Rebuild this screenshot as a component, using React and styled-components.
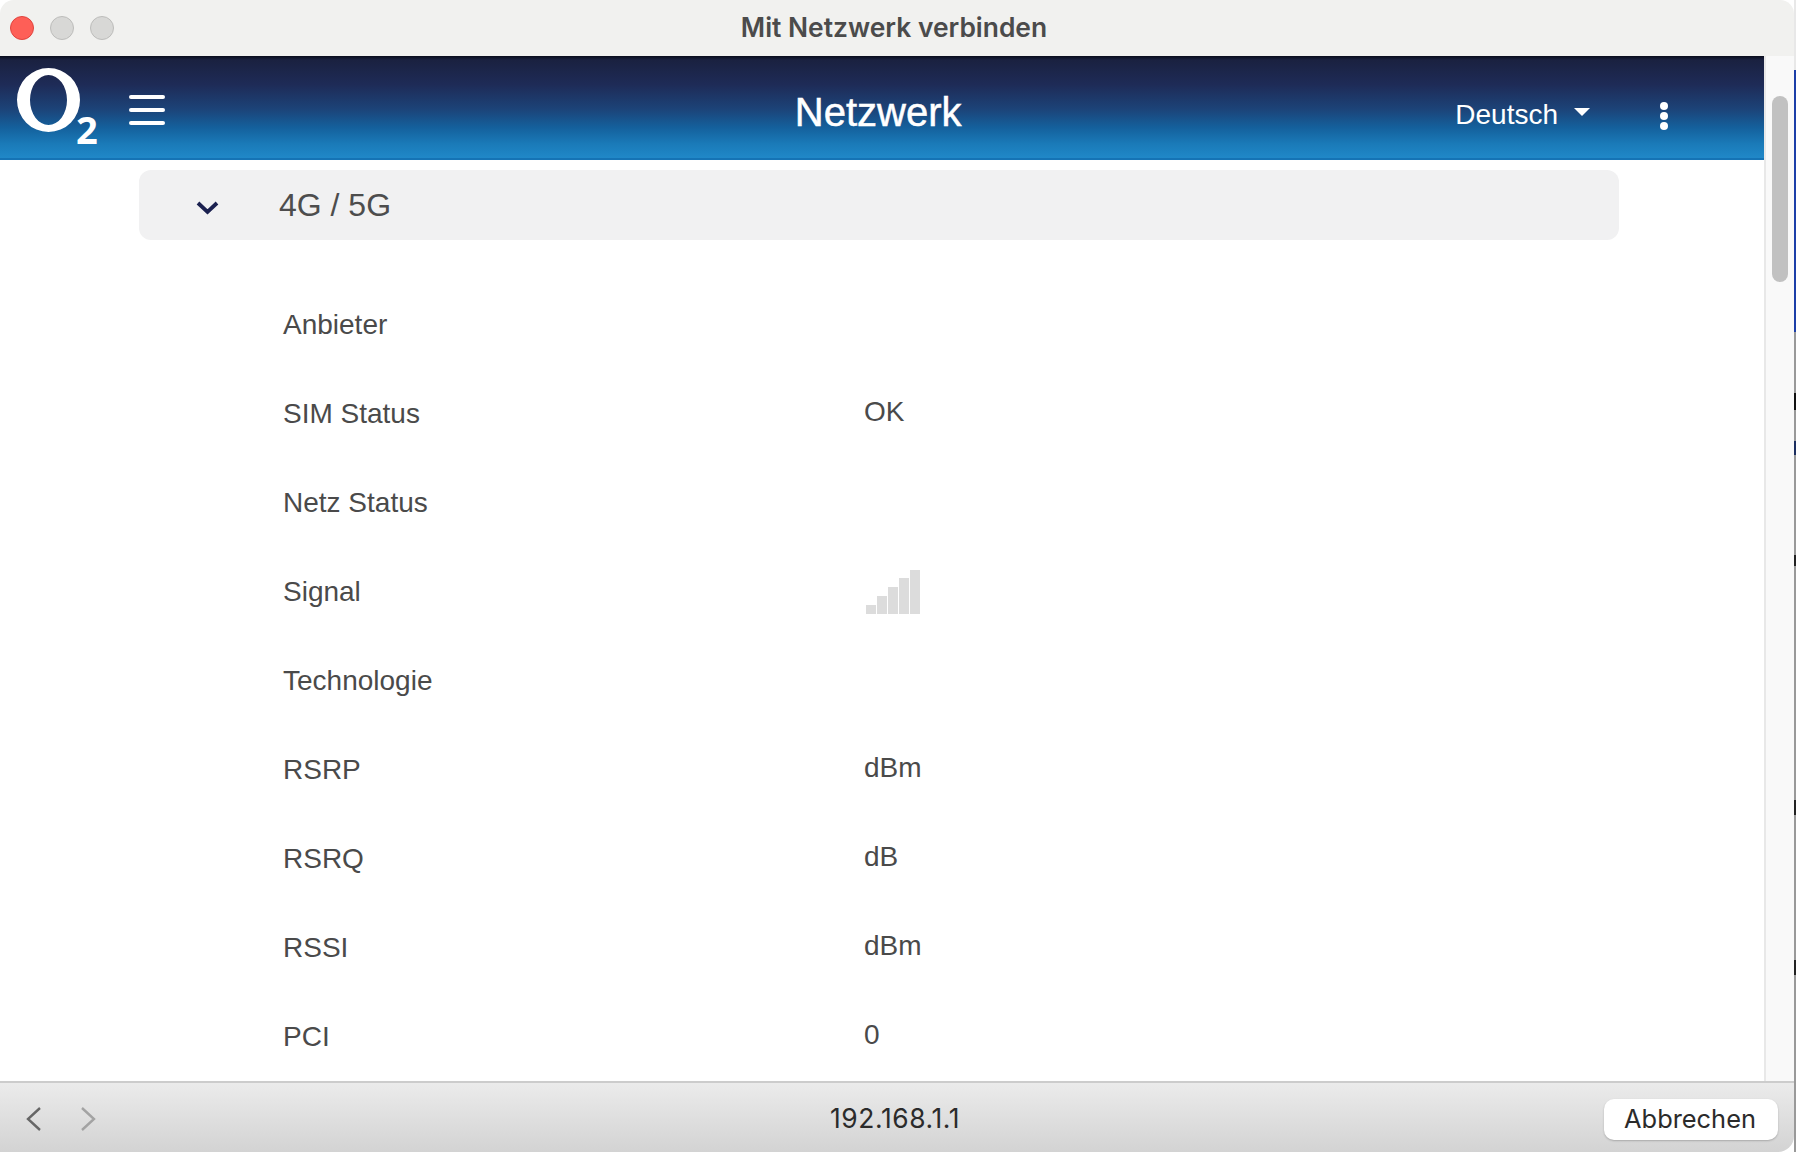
import React from 'react';
import styled, { createGlobalStyle } from 'styled-components';

const GlobalStyle = createGlobalStyle`
  html, body {
    margin: 0;
    padding: 0;
    background: #ffffff;
    overflow: hidden;
  }
`;

const Desktop = styled.div`
  display: flex;
  width: 1796px;
  height: 1152px;
  background: #ffffff;
`;

const Edge = styled.div`
  width: 2px;
  background: linear-gradient(
    to bottom,
    #e8e8e8 0, #e8e8e8 70px,
    #1c3fa8 70px, #1c3fa8 332px,
    #999 332px, #999 393px,
    #111 393px, #111 410px,
    #999 410px, #999 441px,
    #1c2f60 441px, #1c2f60 455px,
    #999 455px, #999 555px,
    #222 555px, #222 566px,
    #999 566px, #999 800px,
    #222 800px, #222 815px,
    #999 815px, #999 960px,
    #222 960px, #222 975px,
    #999 975px
  );
`;

const Window = styled.div`
  flex: 1;
  display: flex;
  flex-direction: column;
  overflow: hidden;
  border-radius: 14px 14px 16px 0;
  font-family: "Liberation Sans", Arial, sans-serif;
`;

const TitleBar = styled.div`
  position: relative;
  height: 56px;
  flex-shrink: 0;
  display: flex;
  align-items: center;
  justify-content: center;
  box-sizing: border-box;
  padding: 0 6px 3px 0;
  background: #f1f1ef;
`;

const Lights = styled.div`
  position: absolute;
  left: 10px;
  top: 16px;
  display: flex;
  gap: 16px;
`;

const Light = styled.span`
  width: 24px;
  height: 24px;
  box-sizing: border-box;
  border-radius: 50%;
  background: ${(p) => p.$color};
  border: 1px solid ${(p) => p.$border};
`;

const WindowTitle = styled.div`
  font-family: Inter, sans-serif;
  font-size: 26.4px;
  font-weight: 600;
  color: #4b4b4b;
`;

const Middle = styled.div`
  flex: 1;
  min-height: 0;
  display: flex;
`;

const Page = styled.div`
  flex: 1;
  min-width: 0;
  display: flex;
  flex-direction: column;
  overflow: hidden;
  background: #ffffff;
`;

const Header = styled.header`
  height: 104px;
  flex-shrink: 0;
  display: flex;
  align-items: flex-start;
  box-sizing: border-box;
  color: #ffffff;
  border-bottom: 2px solid #1573b5;
  background: linear-gradient(to bottom, #0a0c1c 0, #1a2140 4px, #1e2b57 28%, #1c4378 52%, #14609c 70%, #1a7ab8 86%, #2088c8 100%);
`;

const Logo = styled.svg`
  margin: 10px 0 0 15px;
  width: 90px;
  height: 92px;
  flex-shrink: 0;
`;

const Burger = styled.div`
  margin: 39px 0 0 24px;
  width: 36px;
  display: flex;
  flex-direction: column;
  gap: 9.5px;
`;

const BurgerLine = styled.span`
  height: 3.5px;
  border-radius: 2px;
  background: #ffffff;
`;

const PageTitle = styled.h1`
  margin: 31px 0 0 0;
  flex: 1;
  text-align: center;
  font-size: 40px;
  line-height: 50px;
  font-weight: 400;
  -webkit-text-stroke: 0.5px #fff;
  padding-left: 136px;
`;

const Lang = styled.div`
  margin: 40px 0 0 0;
  display: flex;
  align-items: center;
  gap: 16px;
  font-size: 28px;
  line-height: 38px;
`;

const Caret = styled.span`
  width: 0;
  height: 0;
  margin-top: -6px;
  border-left: 8px solid transparent;
  border-right: 8px solid transparent;
  border-top: 8px solid #ffffff;
`;

const Dots = styled.div`
  margin: 46px 96px 0 70px;
  display: flex;
  flex-direction: column;
  gap: 2px;
`;

const Dot = styled.span`
  width: 8px;
  height: 8px;
  border-radius: 50%;
  background: #ffffff;
`;

const Content = styled.main`
  flex: 1;
  min-height: 0;
  padding: 10px 145px 0 139px;
`;

const Panel = styled.div`
  height: 70px;
  display: flex;
  align-items: center;
  border-radius: 12px;
  background: #f1f1f2;
  color: #4d4d4d;
  font-size: 32px;
`;

const Chevron = styled.svg`
  margin-left: 56px;
  width: 24px;
  height: 16px;
  margin-top: 5px;
`;

const PanelLabel = styled.span`
  margin-left: 60px;
`;

const Rows = styled.div`
  padding: 40px 0 0 144px;
`;

const Row = styled.div`
  height: 89px;
  display: grid;
  grid-template-columns: 581px 1fr;
  align-items: center;
  font-size: 28px;
  color: #4a4a4a;
`;

const Value = styled.div`
  margin-top: -4px;
`;

const Bars = styled.div`
  display: flex;
  align-items: flex-end;
  gap: 1px;
  height: 44px;
  margin: 0 0 0 2px;
`;

const Bar = styled.span`
  width: 10px;
  height: ${(p) => p.$h}px;
  background: #dcdcdc;
`;

const ScrollTrack = styled.div`
  width: 30px;
  flex-shrink: 0;
  box-sizing: border-box;
  background: #f9f9f9;
  border-left: 2px solid #e8e8e8;
  padding: 40px 6px 0 6px;
`;

const ScrollThumb = styled.div`
  height: 186px;
  border-radius: 8px;
  background: #c1c1c1;
`;

const Footer = styled.footer`
  position: relative;
  height: 71px;
  flex-shrink: 0;
  box-sizing: border-box;
  display: flex;
  align-items: center;
  justify-content: center;
  padding-right: 4px;
  border-top: 2px solid #cccccc;
  background: linear-gradient(to bottom, #ebebeb, #d3d3d3);
`;

const NavIcons = styled.div`
  position: absolute;
  left: 25px;
  top: 23px;
  display: flex;
  gap: 36px;
`;

const NavIcon = styled.svg`
  width: 18px;
  height: 26px;
  stroke: ${(p) => p.$color};
  stroke-width: 2.4;
  fill: none;
`;

const Url = styled.div`
  font-family: Inter, sans-serif;
  font-size: 26.4px;
  letter-spacing: 0.6px;
  color: #2b2b2b;
`;

const CancelButton = styled.button`
  position: absolute;
  right: 16px;
  top: 16px;
  width: 174px;
  height: 41px;
  border: 0;
  border-radius: 10px;
  background: #ffffff;
  box-shadow: 0 1px 2px rgba(0, 0, 0, 0.22);
  font-family: Inter, sans-serif;
  font-size: 25.4px;
  color: #2b2b2b;
  padding: 0 2px 3px 0;
`;

const rows = [
  ['Anbieter', ''],
  ['SIM Status', 'OK'],
  ['Netz Status', ''],
  ['Signal', 'bars'],
  ['Technologie', ''],
  ['RSRP', 'dBm'],
  ['RSRQ', 'dB'],
  ['RSSI', 'dBm'],
  ['PCI', '0'],
];

const App = () => (
  <>
    <GlobalStyle />
    <Desktop>
      <Window>
        <TitleBar>
          <Lights>
            <Light $color="#fe5f57" $border="#e0443e" />
            <Light $color="#d8d8d6" $border="#bdbdbb" />
            <Light $color="#d8d8d6" $border="#bdbdbb" />
          </Lights>
          <WindowTitle>Mit Netzwerk verbinden</WindowTitle>
        </TitleBar>
        <Middle>
          <Page>
            <Header>
              <Logo viewBox="0 0 90 92">
                <path
                  fill="#fff"
                  fillRule="evenodd"
                  d="M2 34a31.5 32 0 1 0 63 0a31.5 32 0 1 0 -63 0Z M15 34a18.5 25 0 1 0 37 0a18.5 25 0 1 0 -37 0Z"
                />
                <text x="61" y="78" fill="#fff" fontFamily="Open Sans" fontWeight="700" fontSize="38">2</text>
              </Logo>
              <Burger>
                <BurgerLine />
                <BurgerLine />
                <BurgerLine />
              </Burger>
              <PageTitle>Netzwerk</PageTitle>
              <Lang>
                Deutsch
                <Caret />
              </Lang>
              <Dots>
                <Dot />
                <Dot />
                <Dot />
              </Dots>
            </Header>
            <Content>
              <Panel>
                <Chevron viewBox="0 0 24 16">
                  <path d="M3 3l9.5 9 9.5-9" fill="none" stroke="#1b2150" strokeWidth="3.8" />
                </Chevron>
                <PanelLabel>4G / 5G</PanelLabel>
              </Panel>
              <Rows>
                {rows.map(([label, value]) => (
                  <Row key={label}>
                    <div>{label}</div>
                    {value === 'bars' ? (
                      <Bars>
                        {[9, 18, 27, 36, 44].map((h) => <Bar key={h} $h={h} />)}
                      </Bars>
                    ) : (
                      <Value>{value}</Value>
                    )}
                  </Row>
                ))}
              </Rows>
            </Content>
          </Page>
          <ScrollTrack>
            <ScrollThumb />
          </ScrollTrack>
        </Middle>
        <Footer>
          <NavIcons>
            <NavIcon viewBox="0 0 18 26" $color="#666666"><path d="M15 2L3 13l12 11" /></NavIcon>
            <NavIcon viewBox="0 0 18 26" $color="#a3a3a3"><path d="M3 2l12 11L3 24" /></NavIcon>
          </NavIcons>
          <Url>192.168.1.1</Url>
          <CancelButton>Abbrechen</CancelButton>
        </Footer>
      </Window>
      <Edge />
    </Desktop>
  </>
);

export default App;
